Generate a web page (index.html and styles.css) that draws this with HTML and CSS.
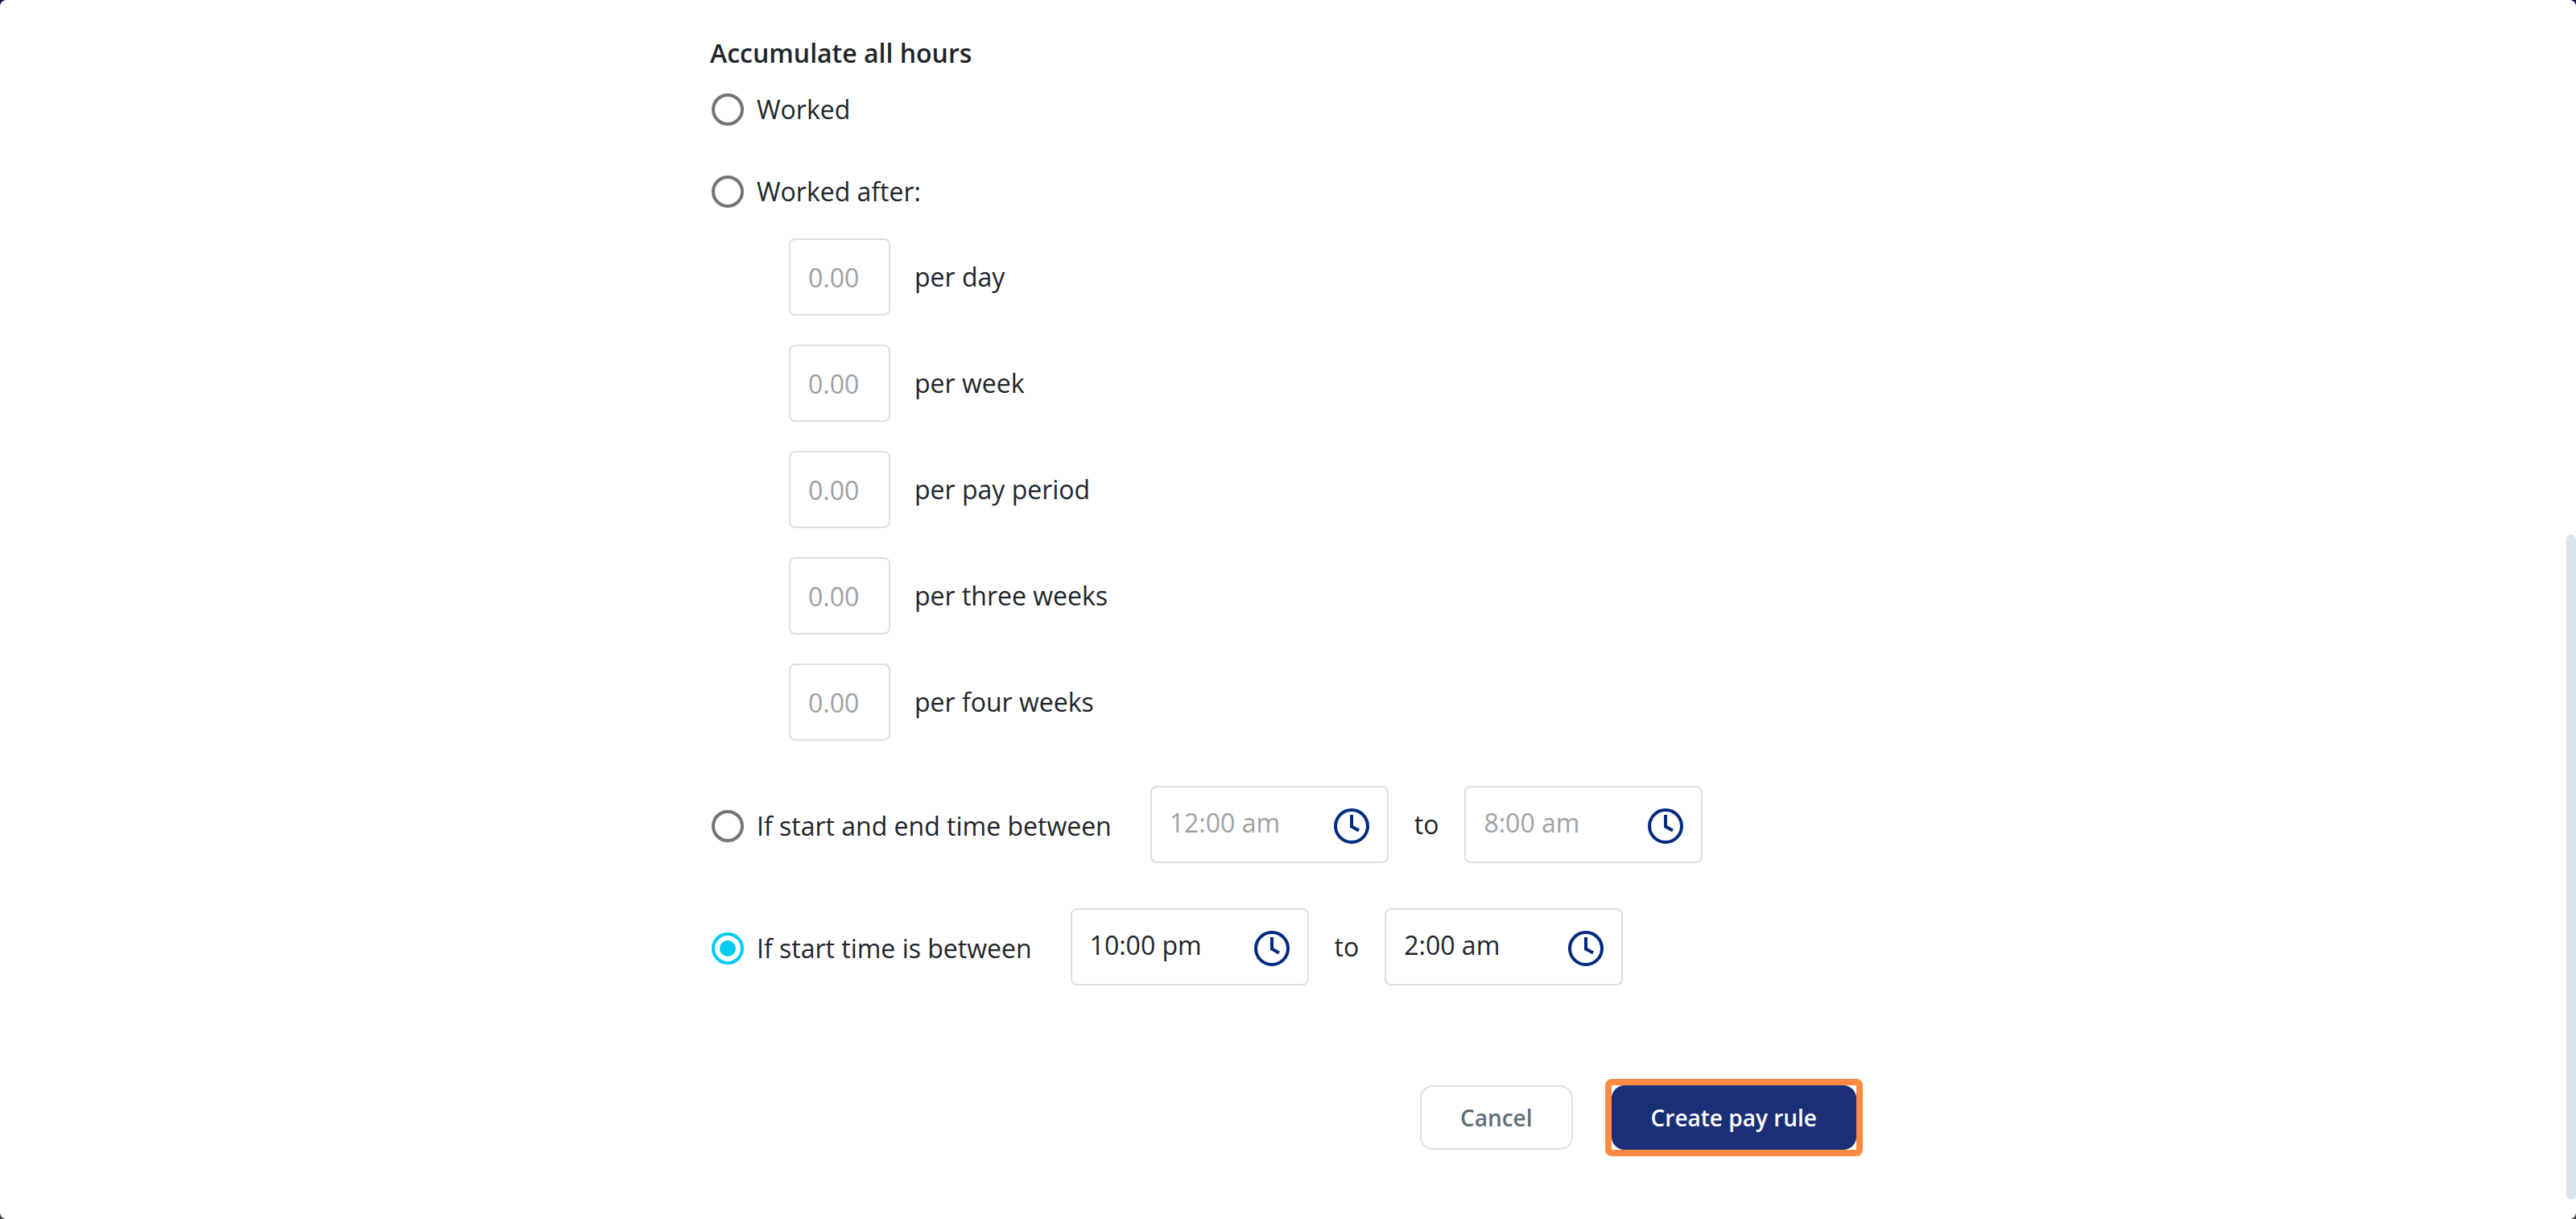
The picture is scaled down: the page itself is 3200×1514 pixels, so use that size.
FILE: index.html
```
<!DOCTYPE html>
<html lang="en">
<head>
    <meta charset="UTF-8">
    <meta name="viewport" content="width=device-width, initial-scale=1.0">
    <title>Create pay rule</title>
    <link rel="stylesheet" href="styles.css">
</head>
<body>
    <!-- Clock icon shared by the time fields -->
    <svg class="sprite" aria-hidden="true">
        <symbol id="clock" viewBox="0 0 44 44">
            <circle cx="22" cy="22" r="20" />
            <path d="M22 8v14.5l9 5" />
        </symbol>
    </svg>

    <main class="page">
        <form class="rule-form">
            <fieldset class="hours">
                <legend>Accumulate all hours</legend>

                <div class="option">
                    <input type="radio" id="worked" name="accumulate">
                    <label for="worked">Worked</label>
                </div>

                <div class="option option-after">
                    <input type="radio" id="worked-after" name="accumulate">
                    <label for="worked-after">Worked after:</label>
                </div>

                <div class="limits">
                    <div class="limit">
                        <input type="text" id="per-day" class="field" placeholder="0.00">
                        <label for="per-day">per day</label>
                    </div>
                    <div class="limit">
                        <input type="text" id="per-week" class="field" placeholder="0.00">
                        <label for="per-week">per week</label>
                    </div>
                    <div class="limit">
                        <input type="text" id="per-period" class="field" placeholder="0.00">
                        <label for="per-period">per pay period</label>
                    </div>
                    <div class="limit">
                        <input type="text" id="per-three-weeks" class="field" placeholder="0.00">
                        <label for="per-three-weeks">per three weeks</label>
                    </div>
                    <div class="limit">
                        <input type="text" id="per-four-weeks" class="field" placeholder="0.00">
                        <label for="per-four-weeks">per four weeks</label>
                    </div>
                </div>

                <div class="time-row">
                    <div class="option">
                        <input type="radio" id="start-end" name="accumulate">
                        <label for="start-end">If start and end time between</label>
                    </div>
                    <div class="range">
                        <div class="field time-field">
                            <input type="text" aria-label="Start and end from" placeholder="12:00 am">
                            <svg class="clock"><use href="#clock" /></svg>
                        </div>
                        <span>to</span>
                        <div class="field time-field">
                            <input type="text" aria-label="Start and end to" placeholder="8:00 am">
                            <svg class="clock"><use href="#clock" /></svg>
                        </div>
                    </div>
                </div>

                <div class="time-row">
                    <div class="option">
                        <input type="radio" id="start-only" name="accumulate" checked>
                        <label for="start-only">If start time is between</label>
                    </div>
                    <div class="range">
                        <div class="field time-field">
                            <input type="text" aria-label="Start from" value="10:00 pm">
                            <svg class="clock"><use href="#clock" /></svg>
                        </div>
                        <span>to</span>
                        <div class="field time-field">
                            <input type="text" aria-label="Start to" value="2:00 am">
                            <svg class="clock"><use href="#clock" /></svg>
                        </div>
                    </div>
                </div>
            </fieldset>

            <div class="actions">
                <button type="button" class="btn btn-cancel">Cancel</button>
                <button type="submit" class="btn btn-create">Create pay rule</button>
            </div>
        </form>
    </main>

    <div class="scroll-thumb"></div>
</body>
</html>
```
FILE: styles.css
```
* {
    box-sizing: border-box;
}
body {
    margin: 0;
    background: linear-gradient(#0b0f45, #444);
    color: #212529;
    font-family: "Open Sans", "Noto Sans", sans-serif;
    font-size: 32px;
    line-height: 48px;
}
.sprite {
    display: none;
}
.page {
    min-height: 100vh;
    padding: 42px 12px 40px 0;
    background: #fff;
    border-radius: 8px;
}
.rule-form {
    max-width: 1424px;
    margin: 0 auto;
}
.hours {
    margin: 0;
    padding: 0;
    border: none;
}
legend {
    margin-bottom: 22px;
    padding: 0;
    font-weight: 600;
}

/* Radio options */
.option {
    display: flex;
    align-items: center;
    gap: 16px;
    padding-left: 2px;
}
.option-after {
    margin-top: 54px;
}
input[type="radio"] {
    appearance: none;
    display: grid;
    place-items: center;
    width: 40px;
    height: 40px;
    margin: 0;
    border: 4px solid #757575;
    border-radius: 50%;
}
input[type="radio"]:checked {
    border-color: #00cdf2;
}
input[type="radio"]:checked::before {
    content: "";
    width: 20px;
    height: 20px;
    border-radius: 50%;
    background: #00cdf2;
}

/* Text fields */
input[type="text"] {
    color: inherit;
    font: inherit;
    outline: none;
}
input::placeholder {
    color: #a1a1a1;
    opacity: 1;
}
.field {
    height: 96px;
    padding: 0 22px;
    border: 2px solid #dfdfdf;
    border-radius: 8px;
    background: #fff;
}
.limits {
    display: grid;
    gap: 36px;
    margin-top: 34px;
    padding-left: 98px;
}
.limit {
    display: flex;
    align-items: center;
    gap: 30px;
}
.limit .field {
    width: 126px;
}

/* Time ranges */
.time-row {
    display: flex;
    align-items: center;
    gap: 48px;
    margin-top: 56px;
}
.time-row .option {
    padding-top: 4px;
}
.range {
    display: flex;
    align-items: center;
    gap: 32px;
}
.time-field {
    display: flex;
    align-items: center;
    width: 296px;
}
.time-field input {
    flex: 1;
    min-width: 0;
    padding: 0 0 4px;
    border: none;
    background: none;
}
.clock {
    width: 44px;
    height: 48px;
    padding-top: 4px;
    fill: none;
    stroke: #00297f;
    stroke-width: 4;
}

/* Buttons */
.actions {
    display: flex;
    justify-content: flex-end;
    gap: 48px;
    margin-top: 124px;
}
.btn {
    height: 80px;
    padding: 0 48px;
    border: 2px solid #dfdfdf;
    border-radius: 16px;
    background: #fff;
    color: #5f6e78;
    font: inherit;
    font-size: 28px;
    font-weight: 600;
    cursor: pointer;
}
.btn-create {
    position: relative;
    padding: 0 47px;
    border-color: #1a2f75;
    background: #1a2f75;
    color: #fff;
}
/* Highlight frame round the main action */
.btn-create::after {
    content: "";
    position: absolute;
    inset: -10px;
    border: 8px solid #ff8a42;
    border-radius: 8px;
}

.scroll-thumb {
    position: fixed;
    top: 664px;
    right: 0;
    bottom: 24px;
    width: 12px;
    border-radius: 6px;
    background: #dae4ec;
}
```
